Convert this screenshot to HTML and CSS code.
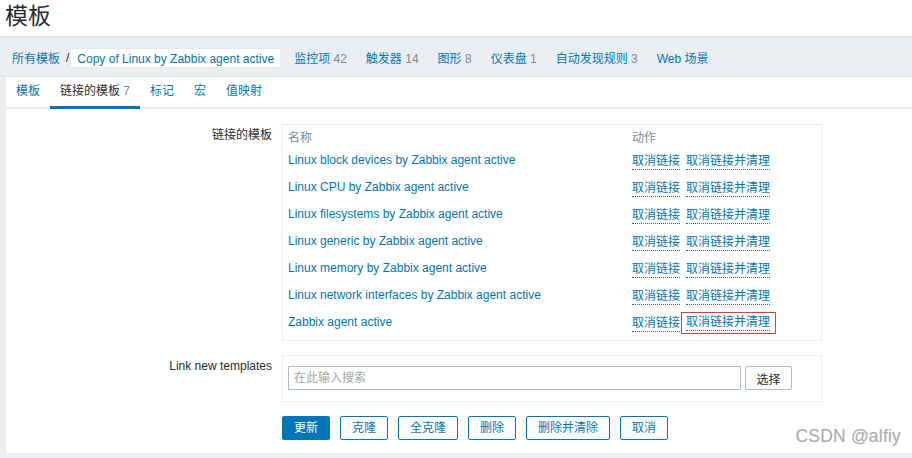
FILE: index.html
```html
<!DOCTYPE html>
<html lang="zh">
<head>
<meta charset="utf-8">
<title>模板</title>
<link rel="stylesheet" href="styles.css">
</head>
<body>
<header class="page-head">
  <h1 class="page-title">模板</h1>
</header>
<nav class="navbar">
  <div class="crumbs">
    <a class="crumb-link">所有模板</a>
    <span class="crumb-sep">/</span>
    <span class="crumb-current">Copy of Linux by Zabbix agent active</span>
  </div>
  <ul class="nav-items">
    <li><a>监控项</a> <span class="count">42</span></li>
    <li><a>触发器</a> <span class="count">14</span></li>
    <li><a>图形</a> <span class="count">8</span></li>
    <li><a>仪表盘</a> <span class="count">1</span></li>
    <li><a>自动发现规则</a> <span class="count">3</span></li>
    <li><a>Web 场景</a></li>
  </ul>
</nav>
<main class="content">
  <ul class="tabs">
    <li class="tab"><a>模板</a></li>
    <li class="tab active">链接的模板 <span class="count">7</span></li>
    <li class="tab"><a>标记</a></li>
    <li class="tab"><a>宏</a></li>
    <li class="tab"><a>值映射</a></li>
  </ul>
  <div class="form">
    <div class="form-row">
      <label class="form-label">链接的模板</label>
      <div class="box linked">
        <div class="thead">
          <span>名称</span>
          <span>动作</span>
        </div>
        <div class="trow"><a class="name">Linux block devices by Zabbix agent active</a><span class="acts"><a class="act">取消链接</a><a class="act">取消链接并清理</a></span></div>
        <div class="trow"><a class="name">Linux CPU by Zabbix agent active</a><span class="acts"><a class="act">取消链接</a><a class="act">取消链接并清理</a></span></div>
        <div class="trow"><a class="name">Linux filesystems by Zabbix agent active</a><span class="acts"><a class="act">取消链接</a><a class="act">取消链接并清理</a></span></div>
        <div class="trow"><a class="name">Linux generic by Zabbix agent active</a><span class="acts"><a class="act">取消链接</a><a class="act">取消链接并清理</a></span></div>
        <div class="trow"><a class="name">Linux memory by Zabbix agent active</a><span class="acts"><a class="act">取消链接</a><a class="act">取消链接并清理</a></span></div>
        <div class="trow"><a class="name">Linux network interfaces by Zabbix agent active</a><span class="acts"><a class="act">取消链接</a><a class="act">取消链接并清理</a></span></div>
        <div class="trow"><a class="name">Zabbix agent active</a><span class="acts"><a class="act">取消链接</a><span class="marked"><a class="act">取消链接并清理</a></span></span></div>
      </div>
    </div>
    <div class="form-row second">
      <label class="form-label">Link new templates</label>
      <div class="box search">
        <input class="search-input" type="text" placeholder="在此输入搜索">
        <button class="btn-select">选择</button>
      </div>
    </div>
    <div class="buttons">
      <button class="btn primary">更新</button>
      <button class="btn">克隆</button>
      <button class="btn">全克隆</button>
      <button class="btn">删除</button>
      <button class="btn">删除并清除</button>
      <button class="btn">取消</button>
    </div>
  </div>
  <div class="watermark">CSDN @alfiy</div>
</main>
</body>
</html>
```
FILE: styles.css
```css
* { box-sizing: border-box; }
html, body {
  margin: 0;
  padding: 0;
}
body {
  width: 912px;
  height: 458px;
  overflow: hidden;
  background: #ebeef0;
  font-family: "Liberation Sans", "Noto Sans CJK SC", sans-serif;
  font-size: 12px;
  color: #1f2c33;
}
a { color: #0275b8; text-decoration: none; }
ul { list-style: none; margin: 0; padding: 0; }

.page-head {
  background: #fff;
  height: 37px;
  padding-left: 5px;
  border-bottom: 1px solid #dfe4e7;
}
.page-title {
  margin: 0;
  font-size: 23px;
  font-weight: normal;
  line-height: 32px;
  color: #1f2c33;
}

.navbar {
  height: 40px;
  display: flex;
  align-items: center;
  padding-left: 12px;
  padding-top: 2px;
  border-bottom: 1px solid #dfe4e7;
}
.crumbs { display: flex; align-items: center; }
.crumb-link { color: #0275b8; }
.crumb-sep { margin: 0 1px 0 6px; color: #1f2c33; }
.crumb-current {
  background: #fff;
  height: 20px;
  line-height: 20px;
  padding: 0 6px 0 6px;
  color: #0275b8;
  border: 1px solid #e6eaec;
}
.nav-items {
  display: flex;
  gap: 19px;
  margin-left: 13px;
}
.count { color: #768d99; }

.content {
  position: relative;
  margin-left: 6px;
  background: #fff;
  height: 376px;
}
.tabs {
  display: flex;
  height: 32px;
  box-shadow: inset 0 -2px 0 #ebeef0;
}
.tab {
  padding: 0 10px;
  line-height: 29px;
  height: 32px;
}
.tab.active {
  color: #1f2c33;
  border-bottom: 3px solid #0275b8;
}

.form { padding-top: 15px; }
.form-row {
  display: grid;
  grid-template-columns: 266px 540px;
  column-gap: 10px;
}
.form-row.second { margin-top: 14px; }
.form-label {
  text-align: right;
  line-height: 20px;
  padding-top: 1px;
}
.box {
  border: 1px solid #ebeef0;
  padding: 0 5px;
}
.linked { padding-top: 1px; padding-bottom: 4px; }
.thead, .trow {
  display: grid;
  grid-template-columns: 344px auto;
}
.thead {
  height: 21px;
  line-height: 24px;
  color: #768d99;
}
.trow {
  height: 27px;
  line-height: 27px;
}
.acts { display: flex; gap: 6px; align-items: center; }
.act {
  line-height: 15px;
  align-self: center;
  border-bottom: 1px dotted #0275b8;
  margin-top: 2px;
}
.marked {
  display: inline-flex;
  align-items: center;
  border: 1px solid #e53935;
  height: 22px;
  padding: 0 5px 2px 4px;
  margin: 1px 0 0 -5px;
}

.search {
  display: flex;
  gap: 4px;
  padding: 10px 5px 11px;
}
.search-input {
  width: 453px;
  height: 24px;
  border: 1px solid #acbbc4;
  padding: 0 5px;
  font: inherit;
  color: #1f2c33;
  outline: none;
}
.search-input::placeholder { color: #a0a7ab; }
.btn-select {
  width: 47px;
  height: 24px;
  background: #fff;
  border: 1px solid #acbbc4;
  border-radius: 2px;
  font: inherit;
  color: #1f2c33;
  padding: 0;
}

.buttons {
  display: flex;
  gap: 10px;
  margin-left: 276px;
  margin-top: 14px;
}
.btn {
  height: 24px;
  padding: 0 11px;
  background: #fff;
  border: 1px solid #0275b8;
  border-radius: 2px;
  color: #0275b8;
  font: inherit;
  line-height: 22px;
}
.btn.primary {
  background: #0275b8;
  color: #fff;
}

.watermark {
  position: absolute;
  right: 11px;
  top: 349px;
  font-size: 17.5px;
  color: #adadad;
  text-shadow: 0 0 1px #e0e0e0;
  letter-spacing: 0.2px;
}
```
